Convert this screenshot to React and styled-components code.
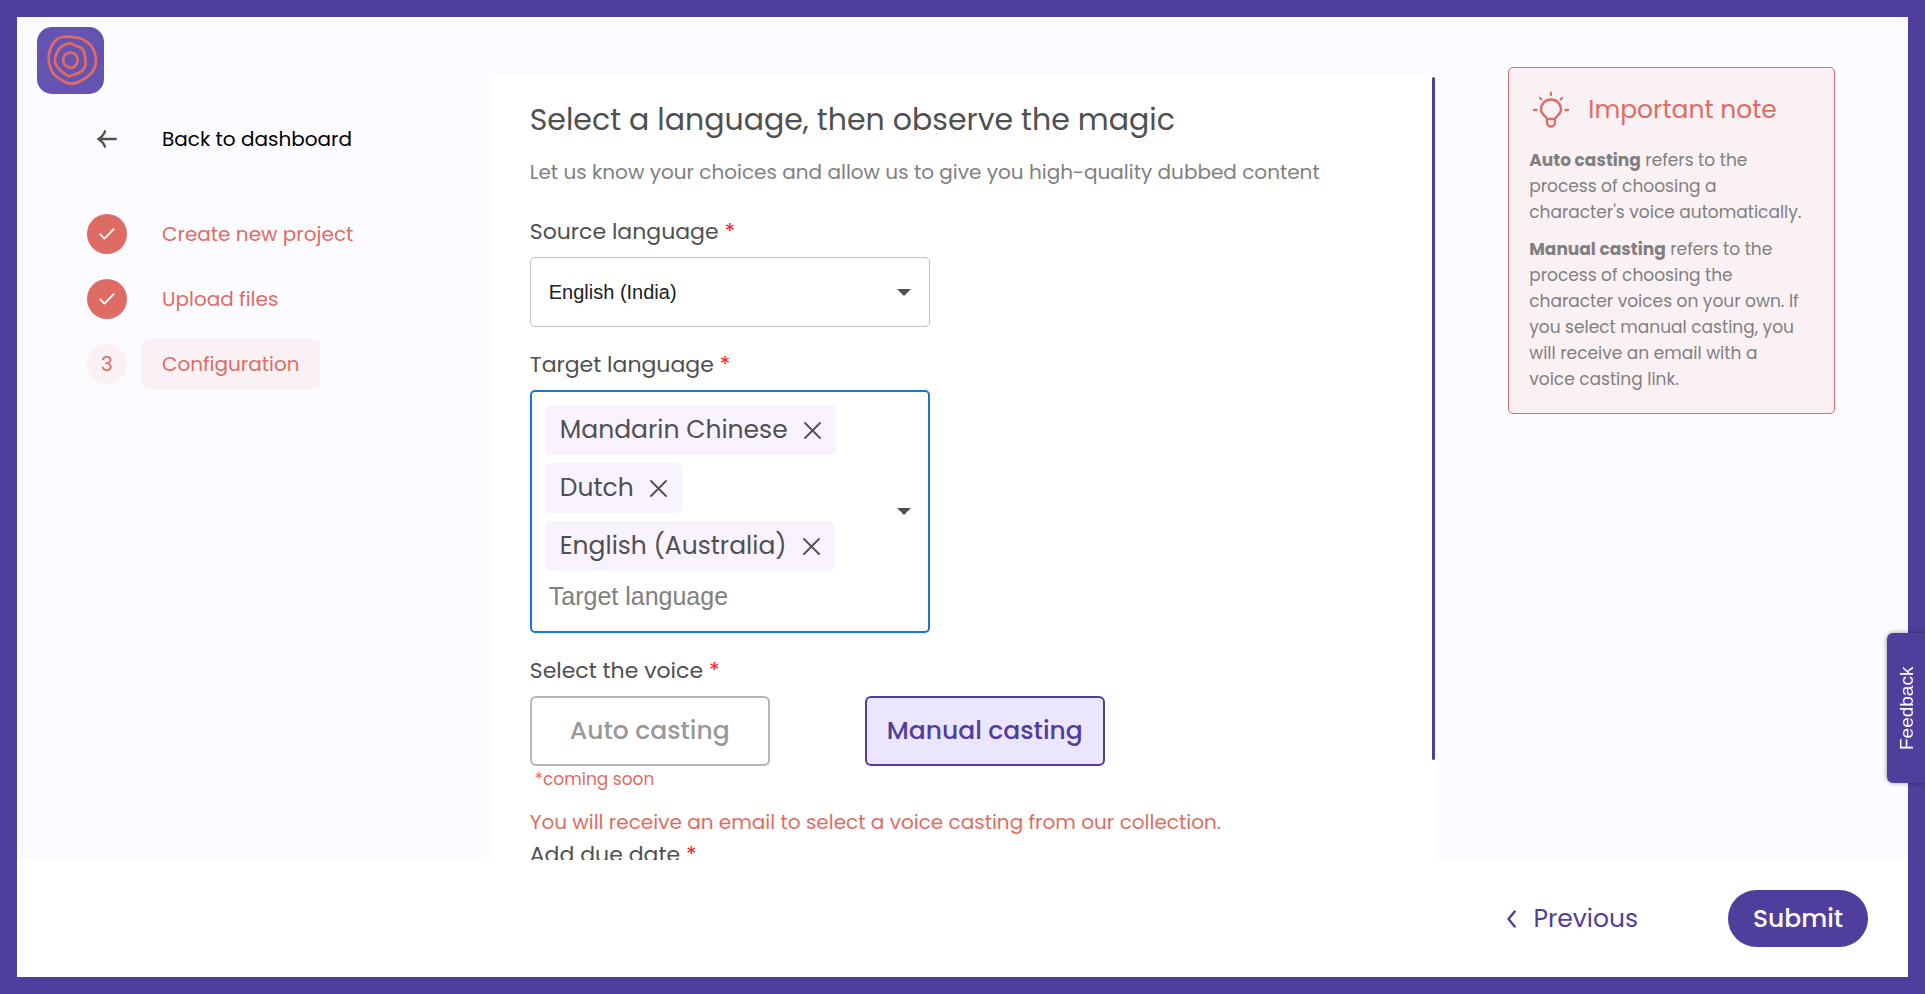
import React, { useEffect, useRef, useState } from "react";
import styled, { createGlobalStyle, css } from "styled-components";

const color = {
  brand: "#503e9c",
  logo: "#6553b1",
  coral: "#de6c64",
  blush: "#faf1f4",
  page: "#fcfbff",
  lilac: "#ebe6fe",
  chip: "#f9f3ff",
  text: "#505050",
  muted: "#808080",
  disabled: "#999999",
  focus: "#1976d2",
};

const GlobalStyle = createGlobalStyle`
  *, *::before, *::after { box-sizing: border-box; }
  body { margin: 0; }
  body, button { font-family: Poppins, Inter, sans-serif; }
  h1, h2, p, ol, ul { margin: 0; padding: 0; }
  ol, ul { list-style: none; }
  button { cursor: pointer; }
`;

const Frame = styled.div`
  display: flex;
  flex-direction: column;
  height: 100vh;
  border: 17px solid ${color.brand};
  background: #fff;
`;

const Main = styled.div`
  flex: 1;
  min-height: 0;
  display: grid;
  grid-template-columns: 1fr 2fr 1fr;
  grid-template-rows: minmax(0, 1fr);
  background: ${color.page};
`;

const Sidebar = styled.aside`
  padding: 10px 20px;
`;

const Logo = styled.svg`
  display: block;
  width: 67px;
  height: 67px;
`;

const Nav = styled.nav`
  margin-top: 30px;
  padding-left: 50px;
  font-size: 20px;
  line-height: 30px;
`;

const BackLink = styled.a`
  display: flex;
  align-items: center;
  gap: 35px;
  color: #000;
  text-decoration: none;
`;

const IconSlot = styled.span`
  display: flex;
  justify-content: center;
  width: 40px;
`;

const Steps = styled.ol`
  display: flex;
  flex-direction: column;
  gap: 15px;
  margin-top: 55px;
`;

const Step = styled.li`
  display: flex;
  align-items: center;
  gap: 15px;
  color: ${color.coral};
`;

const StepMark = styled.span`
  display: grid;
  place-items: center;
  width: 40px;
  height: 40px;
  border-radius: 50%;
  background: ${(p) => (p.$done ? color.coral : color.blush)};
`;

const StepLabel = styled.span`
  padding: 10px 20px;
  border-radius: 5px;
  background: ${(p) => (p.$active ? color.blush : "transparent")};
`;

const Panel = styled.main`
  display: flex;
  min-height: 0;
  margin-top: 60px;
  background: #fff;
`;

const Scroller = styled.div`
  position: relative;
  flex: 1;
  overflow-y: auto;
  scrollbar-width: none;
`;

const ScrollTrack = styled.div`
  width: 3px;
`;

const ScrollThumb = styled.div`
  border-radius: 2px;
  background: ${color.brand};
`;

const Form = styled.form`
  padding: 20px 40px 25px;
`;

const Title = styled.h1`
  color: ${color.text};
  font-size: 30px;
  font-weight: 400;
  line-height: 45px;
`;

const Subtitle = styled.p`
  margin: 15px 0 27px;
  color: ${color.muted};
  font-size: 20px;
  line-height: 30px;
`;

const labelText = css`
  display: block;
  color: ${color.text};
  font-size: 22px;
  line-height: 35px;
`;

const Label = styled.label`
  ${labelText}
`;

const GroupLabel = styled.div`
  ${labelText}
`;

const Star = styled.span`
  color: #ff1a1a;
`;

const Field = styled.div`
  display: flex;
  flex-direction: column;
  gap: 8px;
  margin-bottom: 20px;
`;

const SelectBox = styled.div`
  position: relative;
  width: 400px;
`;

const controlText = css`
  font-family: "Liberation Sans", Arial, sans-serif;
  font-size: 20px;
  color: #212121;
`;

const Select = styled.select`
  ${controlText}
  appearance: none;
  width: 100%;
  height: 70px;
  padding: 0 50px 0 18px;
  border: 1px solid #c0c0c0;
  border-radius: 5px;
  background: #fff;
`;

const DateInput = styled.input`
  ${controlText}
  width: 400px;
  height: 70px;
  padding: 0 18px;
  border: 1px solid #c0c0c0;
  border-radius: 5px;
`;

const Caret = styled.svg`
  display: block;
  width: 14px;
  height: 7px;
  fill: ${color.text};
`;

const SelectCaret = styled(Caret)`
  position: absolute;
  right: 19px;
  top: 32px;
  pointer-events: none;
`;

const TagBox = styled.div`
  display: flex;
  align-items: center;
  justify-content: space-between;
  width: 400px;
  padding-right: 17px;
  border: 2px solid ${color.focus};
  border-radius: 5px;
`;

const Tags = styled.ul`
  && {
    padding: 13px 0 18px 13px;
  }
  display: flex;
  flex-direction: column;
  align-items: flex-start;
  gap: 8px;
`;

const Tag = styled.li`
  display: flex;
  align-items: center;
  gap: 16px;
  height: 50px;
  padding: 0 15px;
  border-radius: 5px;
  background: ${color.chip};
  color: ${color.text};
  font-size: 25px;
`;

const BareButton = styled.button`
  display: flex;
  padding: 0;
  border: 0;
  background: none;
`;

const TagInput = styled.input`
  ${controlText}
  display: block;
  width: 300px;
  height: 34px;
  padding: 0 4px;
  border: 0;
  outline: 0;
  background: none;
  font-size: 25px;
  &::placeholder {
    color: ${color.muted};
    opacity: 1;
  }
`;

const Choices = styled.div`
  display: flex;
  gap: 95px;
`;

const Choice = styled.button`
  width: 240px;
  height: 70px;
  padding: 0;
  border: 2px solid ${(p) => (p.$selected ? color.brand : "#b5b5b5")};
  border-radius: 6px;
  background: ${(p) => (p.$selected ? color.lilac : "#fff")};
  color: ${(p) => (p.$selected ? color.brand : color.disabled)};
  font-size: 25px;
  font-weight: 500;
`;

const Soon = styled.p`
  padding-left: 5px;
  color: ${color.coral};
  font-size: 17px;
  line-height: 26px;
`;

const VoiceGroup = styled.div`
  display: flex;
  flex-direction: column;
  gap: 8px;
`;

const Info = styled.p`
  margin-top: 15px;
  color: ${color.coral};
  font-size: 20px;
  line-height: 30px;
`;

const Side = styled.aside`
  padding: 50px 73px 0;
`;

const Note = styled.section`
  padding: 20px 30px 21px 20px;
  border: 1px solid ${color.coral};
  border-radius: 5px;
  background: ${color.blush};
`;

const NoteHead = styled.div`
  display: flex;
  align-items: center;
  gap: 18px;
  padding-left: 3px;
  margin-bottom: 15px;
`;

const NoteTitle = styled.h2`
  color: ${color.coral};
  font-size: 25px;
  font-weight: 400;
  line-height: 44px;
`;

const NoteText = styled.p`
  color: ${color.muted};
  font-size: 17px;
  line-height: 26px;
  & + & {
    margin-top: 11px;
  }
  strong {
    font-weight: 700;
  }
`;

const Footer = styled.footer`
  display: flex;
  align-items: center;
  justify-content: flex-end;
  gap: 90px;
  height: 117px;
  padding-right: 40px;
`;

const Previous = styled.button`
  display: flex;
  align-items: center;
  gap: 17px;
  padding: 0;
  border: 0;
  background: none;
  color: ${color.brand};
  font-size: 25px;
`;

const Submit = styled.button`
  width: 140px;
  height: 57px;
  border: 0;
  border-radius: 29px;
  background: ${color.brand};
  color: #fff;
  font-size: 25px;
  font-weight: 500;
`;

const Feedback = styled.button`
  position: fixed;
  right: 0;
  bottom: 211px;
  width: 38px;
  height: 150px;
  padding: 0 3px 0 0;
  border: 0;
  border-radius: 0 6px 6px 0;
  background: ${color.brand};
  box-shadow: 0 0 5px rgba(0, 0, 0, 0.4);
  color: #fff;
  font-family: "Liberation Sans", Arial, sans-serif;
  font-size: 19px;
  writing-mode: vertical-rl;
  transform: rotate(180deg);
`;

/* Smooth closed curve through the given points. */
function ring(points) {
  const n = points.length;
  const at = (i) => points[(i + n) % n];
  let d = `M${at(0).join(" ")}`;
  for (let i = 0; i < n; i++) {
    const [a, b, c, e] = [at(i - 1), at(i), at(i + 1), at(i + 2)];
    const c1 = [b[0] + (c[0] - a[0]) / 6, b[1] + (c[1] - a[1]) / 6];
    const c2 = [c[0] - (e[0] - b[0]) / 6, c[1] - (e[1] - b[1]) / 6];
    d += `C${c1.join(" ")} ${c2.join(" ")} ${c.join(" ")}`;
  }
  return d + "Z";
}

const rings = [
  [[25, 10], [35, 10], [45, 12], [55, 20], [59, 33], [56, 44], [47, 52], [36, 56.5], [27, 54.5], [16, 46], [11.7, 33], [13, 23], [18, 14]],
  [[33.5, 16.5], [39, 19], [45, 21.5], [48, 29], [48.5, 37], [46, 43], [39, 47], [32, 49], [26, 45.5], [19, 38], [18, 31], [22, 22], [27, 18]],
  [[30, 26.5], [36, 26], [40.5, 31], [39.5, 37], [34.5, 41], [29, 38.5], [26.5, 36], [26.8, 30]],
].map(ring);

const Check = () => (
  <svg width="16" height="12" viewBox="0 0 16 12" fill="none" stroke="#fff" strokeWidth="1.8" strokeLinecap="round" strokeLinejoin="round" aria-hidden="true">
    <path d="M1.3 6.4 5.4 10.6 14.7 1.2" />
  </svg>
);

const Cross = () => (
  <svg width="17" height="17" viewBox="0 0 17 17" stroke={color.text} strokeWidth="1.8" strokeLinecap="round" aria-hidden="true">
    <path d="M1 1 16 16M16 1 1 16" />
  </svg>
);

const Bulb = () => (
  <svg width="38" height="38" viewBox="0 0 38 38" fill="none" stroke={color.coral} strokeWidth="2.3" strokeLinecap="round" strokeLinejoin="round" aria-hidden="true">
    <path d="M15 28C14.5 25 9 24 9 18.500a10 10 0 0 1 20 0C29 24 23.500 25 23 28Z" />
    <path d="M15 28v3.500a4 4 0 0 0 8 0V28" />
    <path d="M19 2v2M8 7l1.200 1.200M30 7l-1.200 1.200M2 19h2.500M33.500 19H36" />
  </svg>
);

const Required = ({ children }) => (
  <>
    {children} <Star>*</Star>
  </>
);

const steps = [
  { label: "Create new project", done: true },
  { label: "Upload files", done: true },
  { label: "Configuration", active: true },
];

export default function App() {
  const scroller = useRef(null);
  const [thumb, setThumb] = useState({ height: 0, top: 0 });
  const [targets, setTargets] = useState(["Mandarin Chinese", "Dutch", "English (Australia)"]);
  const [casting, setCasting] = useState("manual");

  const measure = () => {
    const { clientHeight, scrollHeight, scrollTop } = scroller.current;
    const ratio = clientHeight / scrollHeight;
    setThumb({ height: clientHeight * ratio, top: scrollTop * ratio });
  };

  useEffect(() => {
    measure();
    window.addEventListener("resize", measure);
    return () => window.removeEventListener("resize", measure);
  }, [targets]);

  return (
    <>
      <GlobalStyle />
      <Frame>
        <Main>
          <Sidebar>
            <Logo viewBox="0 0 67 67" role="img" aria-label="Logo">
              <rect width="67" height="67" rx="15" fill={color.logo} />
              <g fill="none" stroke={color.coral} strokeWidth="2.7">
                {rings.map((d) => (
                  <path key={d} d={d} />
                ))}
              </g>
            </Logo>
            <Nav>
              <BackLink href="#dashboard">
                <IconSlot>
                  <svg width="20" height="18" viewBox="0 0 20 18" fill="none" stroke={color.text} strokeWidth="2.3" strokeLinecap="round" strokeLinejoin="round" aria-hidden="true">
                    <path d="M18.800 9H1.300M8 1.300C7 4 4 7.500 1.300 9c2.700 1.500 5.700 5 6.700 7.700" />
                  </svg>
                </IconSlot>
                Back to dashboard
              </BackLink>
              <Steps>
                {steps.map((step, i) => (
                  <Step key={step.label} aria-current={step.active ? "step" : undefined}>
                    <StepMark $done={step.done}>{step.done ? <Check /> : i + 1}</StepMark>
                    <StepLabel $active={step.active}>{step.label}</StepLabel>
                  </Step>
                ))}
              </Steps>
            </Nav>
          </Sidebar>

          <Panel>
            <Scroller ref={scroller} onScroll={measure}>
              <Form id="configuration" onSubmit={(e) => e.preventDefault()}>
                <Title>Select a language, then observe the magic</Title>
                <Subtitle>Let us know your choices and allow us to give you high-quality dubbed content</Subtitle>

                <Field>
                  <Label htmlFor="source"><Required>Source language</Required></Label>
                  <SelectBox>
                    <Select id="source" defaultValue="en-IN">
                      <option value="en-IN">English (India)</option>
                      <option value="en-AU">English (Australia)</option>
                    </Select>
                    <SelectCaret viewBox="0 0 14 7" aria-hidden="true"><path d="M0 0h14L7 7Z" /></SelectCaret>
                  </SelectBox>
                </Field>

                <Field>
                  <Label htmlFor="target"><Required>Target language</Required></Label>
                  <TagBox>
                    <Tags>
                      {targets.map((name) => (
                        <Tag key={name}>
                          {name}
                          <BareButton type="button" aria-label={`Remove ${name}`} onClick={() => setTargets(targets.filter((t) => t !== name))}>
                            <Cross />
                          </BareButton>
                        </Tag>
                      ))}
                      <li>
                        <TagInput id="target" placeholder="Target language" />
                      </li>
                    </Tags>
                    <BareButton type="button" aria-label="Open target languages">
                      <Caret viewBox="0 0 14 7" aria-hidden="true"><path d="M0 0h14L7 7Z" /></Caret>
                    </BareButton>
                  </TagBox>
                </Field>

                <VoiceGroup role="group" aria-labelledby="voice">
                  <GroupLabel id="voice"><Required>Select the voice</Required></GroupLabel>
                  <Choices>
                    <Choice type="button" disabled>Auto casting</Choice>
                    <Choice type="button" $selected={casting === "manual"} onClick={() => setCasting("manual")}>Manual casting</Choice>
                  </Choices>
                </VoiceGroup>
                <Soon>*coming soon</Soon>
                <Info>You will receive an email to select a voice casting from our collection.</Info>

                <VoiceGroup>
                  <Label htmlFor="due"><Required>Add due date</Required></Label>
                  <DateInput id="due" type="date" />
                </VoiceGroup>
              </Form>
            </Scroller>
            <ScrollTrack aria-hidden="true">
              <ScrollThumb style={{ height: thumb.height, marginTop: thumb.top }} />
            </ScrollTrack>
          </Panel>

          <Side>
            <Note>
              <NoteHead>
                <Bulb />
                <NoteTitle>Important note</NoteTitle>
              </NoteHead>
              <NoteText>
                <strong>Auto casting</strong> refers to the process of choosing a character's voice automatically.
              </NoteText>
              <NoteText>
                <strong>Manual casting</strong> refers to the process of choosing the character voices on your own. If you select manual casting, you will receive an email with a voice casting link.
              </NoteText>
            </Note>
          </Side>
        </Main>

        <Footer>
          <Previous type="button">
            <svg width="9" height="18" viewBox="0 0 9 18" fill="none" stroke={color.brand} strokeWidth="2.4" strokeLinecap="round" strokeLinejoin="round" aria-hidden="true">
              <path d="M7.700 1.500 1.500 9l6.200 7.500" />
            </svg>
            Previous
          </Previous>
          <Submit type="submit" form="configuration">Submit</Submit>
        </Footer>
      </Frame>
      <Feedback type="button">Feedback</Feedback>
    </>
  );
}
